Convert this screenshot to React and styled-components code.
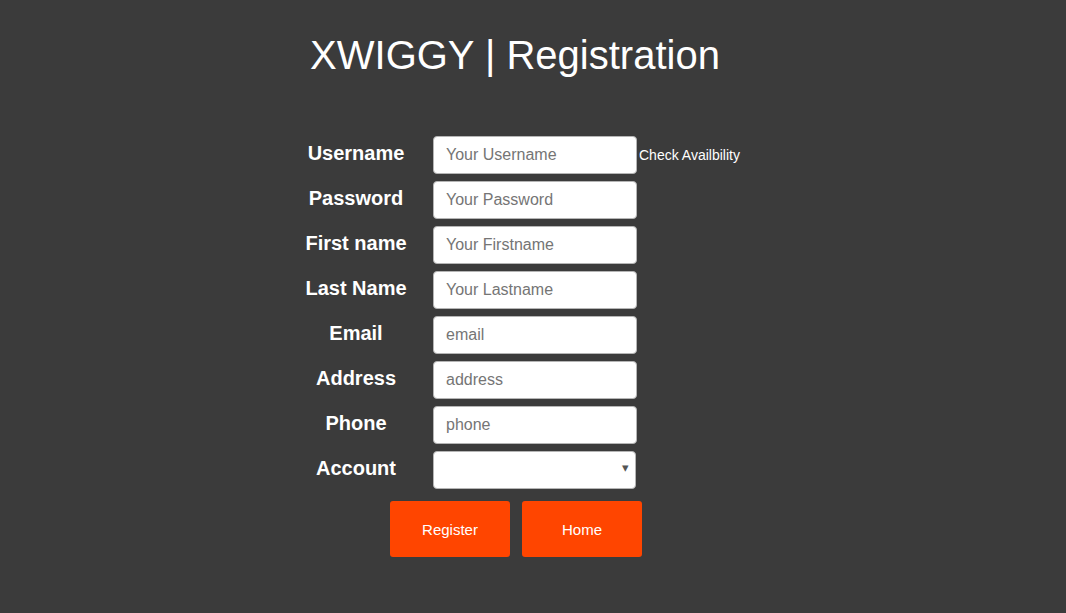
import React from 'react';
import styled, { createGlobalStyle } from 'styled-components';

const GlobalStyle = createGlobalStyle`
  body {
    margin: 0;
    background: #3b3b3b;
    font-family: "Liberation Sans", Arial, sans-serif;
  }
`;

const Page = styled.div`
  width: 1030px;
  min-height: 613px;
  color: white;
`;

const Title = styled.h1`
  margin: 0;
  padding-top: 31px;
  text-align: center;
  font-size: 40px;
  font-weight: normal;
  line-height: 48px;
`;

const Form = styled.form`
  display: grid;
  grid-template-columns: 120px 17px 204px 2px auto;
  row-gap: 7px;
  margin: 57px 0 0 296px;
  align-items: center;
`;

const Label = styled.label`
  grid-column: 1;
  text-align: center;
  font-size: 20px;
  font-weight: bold;
  margin-top: -3px;
`;

const Input = styled.input`
  grid-column: 3;
  box-sizing: border-box;
  width: 204px;
  height: 38px;
  border: 1px solid #b5b5b5;
  border-radius: 4px;
  padding: 0 12px;
  font-family: inherit;
  font-size: 16px;
  color: #333;
  background: white;

  &::placeholder {
    color: #757575;
  }
`;

const SelectWrap = styled.div`
  grid-column: 3;
  position: relative;
  width: 203px;
  height: 38px;

  &::after {
    content: '▾';
    position: absolute;
    right: 7px;
    top: 9px;
    font-size: 13px;
    color: #555;
    pointer-events: none;
  }
`;

const Select = styled.select`
  appearance: none;
  box-sizing: border-box;
  width: 100%;
  height: 100%;
  border: 1px solid #b5b5b5;
  border-radius: 4px;
  background: white;
  font-family: inherit;
  font-size: 16px;
`;

const Side = styled.span`
  grid-column: 5;
  font-size: 14px;
  color: white;
`;

const Buttons = styled.div`
  display: flex;
  gap: 12px;
  margin: 12px 0 0 390px;
`;

const Button = styled.button`
  width: 120px;
  height: 56px;
  border: none;
  border-radius: 3px;
  background: #ff4500;
  color: white;
  font-family: inherit;
  font-size: 15px;
`;

const fields = [
  ['Username', 'Your Username'],
  ['Password', 'Your Password'],
  ['First name', 'Your Firstname'],
  ['Last Name', 'Your Lastname'],
  ['Email', 'email'],
  ['Address', 'address'],
  ['Phone', 'phone'],
];

export default function App() {
  return (
    <Page>
      <GlobalStyle />
      <Title>XWIGGY | Registration</Title>
      <Form>
        {fields.map(([label, ph], i) => (
          <React.Fragment key={label}>
            <Label>{label}</Label>
            <Input placeholder={ph} type={label === 'Password' ? 'password' : 'text'} />
            {i === 0 && <Side>Check Availbility</Side>}
          </React.Fragment>
        ))}
        <Label>Account</Label>
        <SelectWrap>
          <Select defaultValue="">
            <option value=""></option>
            <option value="customer">Customer</option>
            <option value="restaurant">Restaurant</option>
          </Select>
        </SelectWrap>
      </Form>
      <Buttons>
        <Button type="button">Register</Button>
        <Button type="button">Home</Button>
      </Buttons>
    </Page>
  );
}
